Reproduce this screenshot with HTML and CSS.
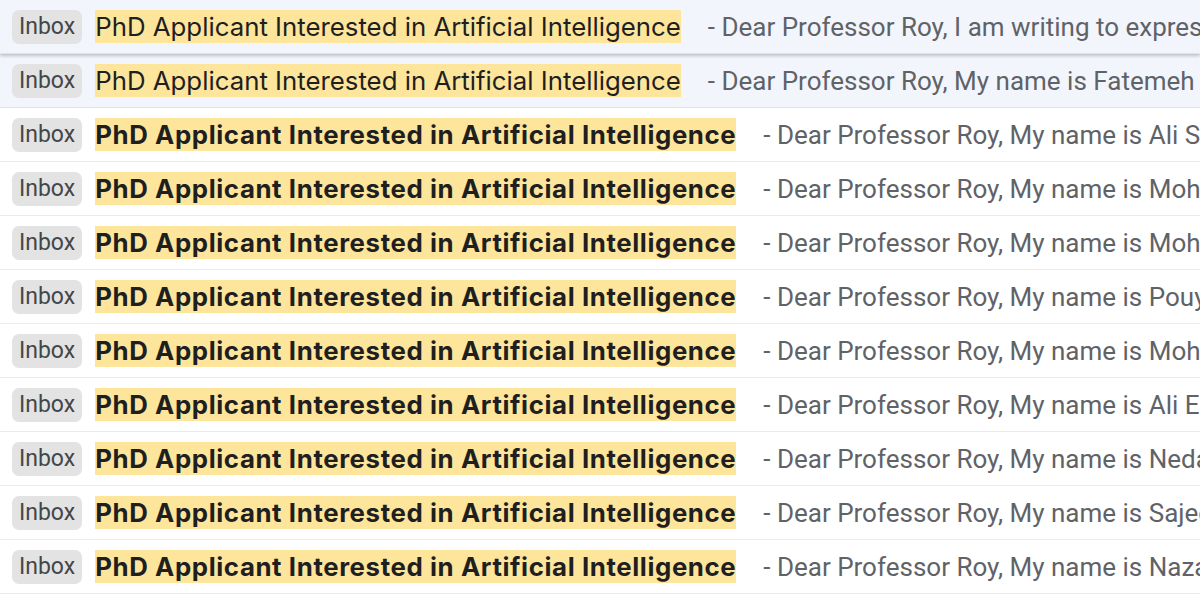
FILE: index.html
```html
<!DOCTYPE html>
<html>
<head>
<meta charset="utf-8">
<link rel="stylesheet" href="styles.css">
</head>
<body>
<div class="list">
  <div class="row read hover"><span class="chip">Inbox</span><span class="subj"><span class="hl">PhD Applicant Interested in Artificial Intelligence</span></span><span class="snip">- Dear Professor Roy, I am writing to express my strong interest in your research group</span></div>
  <div class="row read"><span class="chip">Inbox</span><span class="subj"><span class="hl">PhD Applicant Interested in Artificial Intelligence</span></span><span class="snip">- Dear Professor Roy, My name is Fatemeh and I am applying</span></div>
  <div class="row unread"><span class="chip">Inbox</span><span class="subj"><span class="hl">PhD Applicant Interested in Artificial Intelligence</span></span><span class="snip">- Dear Professor Roy, My name is Ali Shahbazi and I am applying</span></div>
  <div class="row unread"><span class="chip">Inbox</span><span class="subj"><span class="hl">PhD Applicant Interested in Artificial Intelligence</span></span><span class="snip">- Dear Professor Roy, My name is Mohammad and I am applying</span></div>
  <div class="row unread"><span class="chip">Inbox</span><span class="subj"><span class="hl">PhD Applicant Interested in Artificial Intelligence</span></span><span class="snip">- Dear Professor Roy, My name is Mohsen and I am applying</span></div>
  <div class="row unread"><span class="chip">Inbox</span><span class="subj"><span class="hl">PhD Applicant Interested in Artificial Intelligence</span></span><span class="snip">- Dear Professor Roy, My name is Pouya and I am applying</span></div>
  <div class="row unread"><span class="chip">Inbox</span><span class="subj"><span class="hl">PhD Applicant Interested in Artificial Intelligence</span></span><span class="snip">- Dear Professor Roy, My name is Mohammadreza and I am applying</span></div>
  <div class="row unread"><span class="chip">Inbox</span><span class="subj"><span class="hl">PhD Applicant Interested in Artificial Intelligence</span></span><span class="snip">- Dear Professor Roy, My name is Ali Ebrahimi and I am applying</span></div>
  <div class="row unread"><span class="chip">Inbox</span><span class="subj"><span class="hl">PhD Applicant Interested in Artificial Intelligence</span></span><span class="snip">- Dear Professor Roy, My name is Neda and I am applying</span></div>
  <div class="row unread"><span class="chip">Inbox</span><span class="subj"><span class="hl">PhD Applicant Interested in Artificial Intelligence</span></span><span class="snip">- Dear Professor Roy, My name is Sajedeh and I am applying</span></div>
  <div class="row unread"><span class="chip">Inbox</span><span class="subj"><span class="hl">PhD Applicant Interested in Artificial Intelligence</span></span><span class="snip">- Dear Professor Roy, My name is Nazanin and I am applying</span></div>
  <div class="row unread"><span class="chip">Inbox</span><span class="subj"><span class="hl">PhD Applicant Interested in Artificial Intelligence</span></span><span class="snip">- Dear Professor Roy, My name is Reza and I am applying</span></div>
</div>
</body>
</html>
```
FILE: styles.css
```css
html, body {
  margin: 0;
  padding: 0;
  background: #ffffff;
  overflow: hidden;
}
.list {
  display: flex;
  flex-direction: column;
  font-family: Roboto, "Liberation Sans", sans-serif;
}
.row {
  display: flex;
  align-items: center;
  height: 53px;
  border-bottom: 1px solid #e9ebee;
  padding-left: 12px;
  white-space: nowrap;
  overflow: hidden;
  flex-shrink: 0;
}
.row.read {
  background: #f2f6fc;
  border-bottom-color: #dfe3e9;
}
.row.hover {
  position: relative;
  z-index: 1;
  box-shadow: 0 2px 3px rgba(60, 64, 67, 0.28);
}
.chip {
  flex-shrink: 0;
  height: 34px;
  line-height: 34px;
  padding: 0 7px;
  background: #e3e3e3;
  border-radius: 7px;
  color: #444746;
  font-size: 23px;
  margin-right: 13px;
}
.subj {
  flex-shrink: 0;
  font-family: Inter, Roboto, sans-serif;
  font-size: 25.8px;
  color: #1f1f1f;
}
.unread .subj {
  font-weight: 700;
  letter-spacing: 0.6px;
  color: #1f1f1f;
}
.hl {
  display: inline-block;
  background: #fde59c;
  line-height: 33px;
  height: 33px;
}
.snip {
  font-size: 26px;
  color: #5f6368;
  margin-left: 27px;
}
```
